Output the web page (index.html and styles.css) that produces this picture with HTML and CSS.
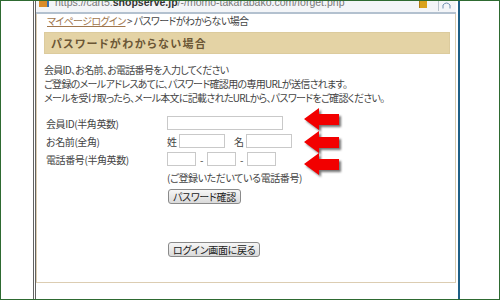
FILE: index.html
```html
<!DOCTYPE html>
<html lang="ja">
<head>
    <meta charset="UTF-8">
    <title>パスワードがわからない場合</title>
    <link rel="stylesheet" href="styles.css">
</head>
<body>
<div class="screen">
    <div class="side"></div>
    <div class="win">
        <div class="addr">
            <span class="fav"></span>
            <span class="url">https://cart5.<b>shopserve.jp</b>/-/momo-takarabako.com/forget.php</span>
            <span class="lock"></span>
            <span class="sep"></span>
            <svg class="reload" width="9" height="8" viewBox="0 0 9 8"><path d="M1 7.5 L1 4 Q4.5 0 8 4 L8 7.5" fill="none" stroke="#6f8fb0" stroke-width="1"/></svg>
        </div>
        <div class="page">
            <div class="crumb"><a href="#">マイページログイン</a> &gt; パスワードがわからない場合</div>
            <h1 class="title">パスワードがわからない場合</h1>
            <p class="intro">
                会員ID、お名前、お電話番号を入力してください<br>
                ご登録のメールアドレスあてに、パスワード確認用の専用URLが送信されます。<br>
                メールを受け取ったら、メール本文に記載されたURLから、パスワードをご確認ください。
            </p>
            <div class="form">
                <div class="label">会員ID(半角英数)</div>
                <div class="field"><input class="in w-id" type="text"></div>

                <div class="label">お名前(全角)</div>
                <div class="field">
                    <span class="mark">姓</span><input class="in w-sei" type="text">
                    <span class="mark mei">名</span><input class="in w-mei" type="text">
                </div>

                <div class="label">電話番号(半角英数)</div>
                <div class="field">
                    <input class="in w-tel" type="text"><span class="dash">-</span><input class="in w-tel" type="text"><span class="dash">-</span><input class="in w-tel" type="text">
                </div>

                <div class="label"></div>
                <div class="field note">(ご登録いただいている電話番号)</div>

                <div class="label"></div>
                <div class="field"><button class="btn">パスワード確認</button></div>

                <svg class="arrow a1" width="40" height="26" viewBox="0 0 40 26"><path d="M0 11 L15 0 L15 6 L35 6 L35 17 L15 17 L15 22 Z" fill="#f20000"/></svg>
                <svg class="arrow a2" width="40" height="26" viewBox="0 0 40 26"><path d="M0 11 L15 0 L15 6 L35 6 L35 17 L15 17 L15 22 Z" fill="#f20000"/></svg>
                <svg class="arrow a3" width="40" height="26" viewBox="0 0 40 26"><path d="M0 11 L15 0 L15 6 L35 6 L35 17 L15 17 L15 22 Z" fill="#f20000"/></svg>
            </div>
            <div class="back"><button class="btn">ログイン画面に戻る</button></div>
        </div>
    </div>
    <div class="side right"></div>
</div>
</body>
</html>
```

FILE: styles.css
```css
body {
    margin: 0;
    font-family: "Noto Sans CJK JP", "Liberation Sans", sans-serif;
}

.screen {
    width: 500px;
    height: 300px;
    box-sizing: border-box;
    border: 1px solid #2e6a31;
    display: flex;
    background: #fff;
    overflow: hidden;
}

.side {
    width: 32px;
    flex: none;
}
.side.right {
    flex: 1;
}

.win {
    width: 427px;
    flex: none;
    box-sizing: border-box;
    border-left: 3px double #626262;
    border-right: 2px solid #1f5f86;
    padding-right: 2px;
    display: flex;
    flex-direction: column;
}

/* 地址栏 */
.addr {
    height: 11px;
    flex: none;
    display: flex;
    align-items: flex-start;
    background: #f3f5f8;
    border-bottom: 2px solid #b3c1cf;
    overflow: hidden;
    padding-left: 3px;
}
.addr .fav {
    width: 8px;
    height: 6px;
    background: #d98c2a;
    border-right: 2px solid #3a6fb0;
    margin-right: 6px;
}
.addr .url {
    font-family: "Liberation Sans", sans-serif;
    font-size: 10.5px;
    line-height: 12px;
    margin-top: -5px;
    color: #777;
    flex: 1;
    white-space: nowrap;
    overflow: hidden;
}
.addr .url b {
    color: #333;
}
.addr .lock {
    width: 7px;
    height: 7px;
    background: #d9a21c;
    border-left: 1px solid #b07a10;
    margin-right: 11px;
}
.addr .sep {
    width: 1px;
    height: 10px;
    background: #b8c2cc;
    margin-right: 3px;
}
.addr .reload {
    margin-right: 5px;
}

/* 页面 */
.page {
    position: relative;
    height: 269px;
    box-sizing: border-box;
    border: 1px solid #dccdb2;
    border-top: none;
    color: #444;
    font-size: 10px;
    letter-spacing: -0.4px;
    font-feature-settings: "palt";
}

.crumb {
    line-height: 14px;
    padding-left: 10px;
    color: #444;
    letter-spacing: -0.6px;
}
.crumb a {
    color: #a0764c;
}

.title {
    margin: 4px 5px 0 7px;
    height: 22px;
    box-sizing: border-box;
    line-height: 20px;
    border: 1px solid #dccb9d;
    background: #e4d3a5;
    padding-left: 6px;
    font-size: 11px;
    font-weight: bold;
    letter-spacing: 1.4px;
    color: #6b5635;
}

.intro {
    margin: 9px 0 0 7px;
    line-height: 14px;
    letter-spacing: -0.7px;
}

.form {
    position: relative;
    margin: 9px 0 0 9px;
    display: grid;
    grid-template-columns: 121px 1fr;
    grid-auto-rows: 18px;
}
.label,
.field {
    display: flex;
    align-items: center;
}
.in {
    height: 14px;
    box-sizing: border-box;
    border: 1px solid #c9c9c9;
    padding: 0;
    margin: 0;
}
.w-id { width: 116px; }
.w-sei { width: 46px; }
.w-mei { width: 46px; }
.w-tel { width: 29px; }
.mark {
    width: 12px;
}
.mark.mei {
    margin-left: 9px;
}
.dash {
    width: 11px;
    text-align: center;
}

.btn {
    height: 15px;
    padding: 0 4px;
    margin: 0 0 0 1px;
    font-family: inherit;
    font-size: 10px;
    letter-spacing: -0.3px;
    font-feature-settings: "palt";
    line-height: 13px;
    color: #222;
    border: 1px solid #8a8a8a;
    border-radius: 3px;
    background: linear-gradient(#f6f6f6, #dadada);
}
.form .btn {
    align-self: flex-end;
}

.back {
    margin: 38px 0 0 130px;
}

/* 红色箭头 */
.arrow {
    position: absolute;
    left: 258px;
    filter: drop-shadow(2px 2px 1px rgba(0, 0, 0, 0.55));
}
.a1 { top: -6px; }
.a2 { top: 17px; }
.a3 { top: 39px; }
```
